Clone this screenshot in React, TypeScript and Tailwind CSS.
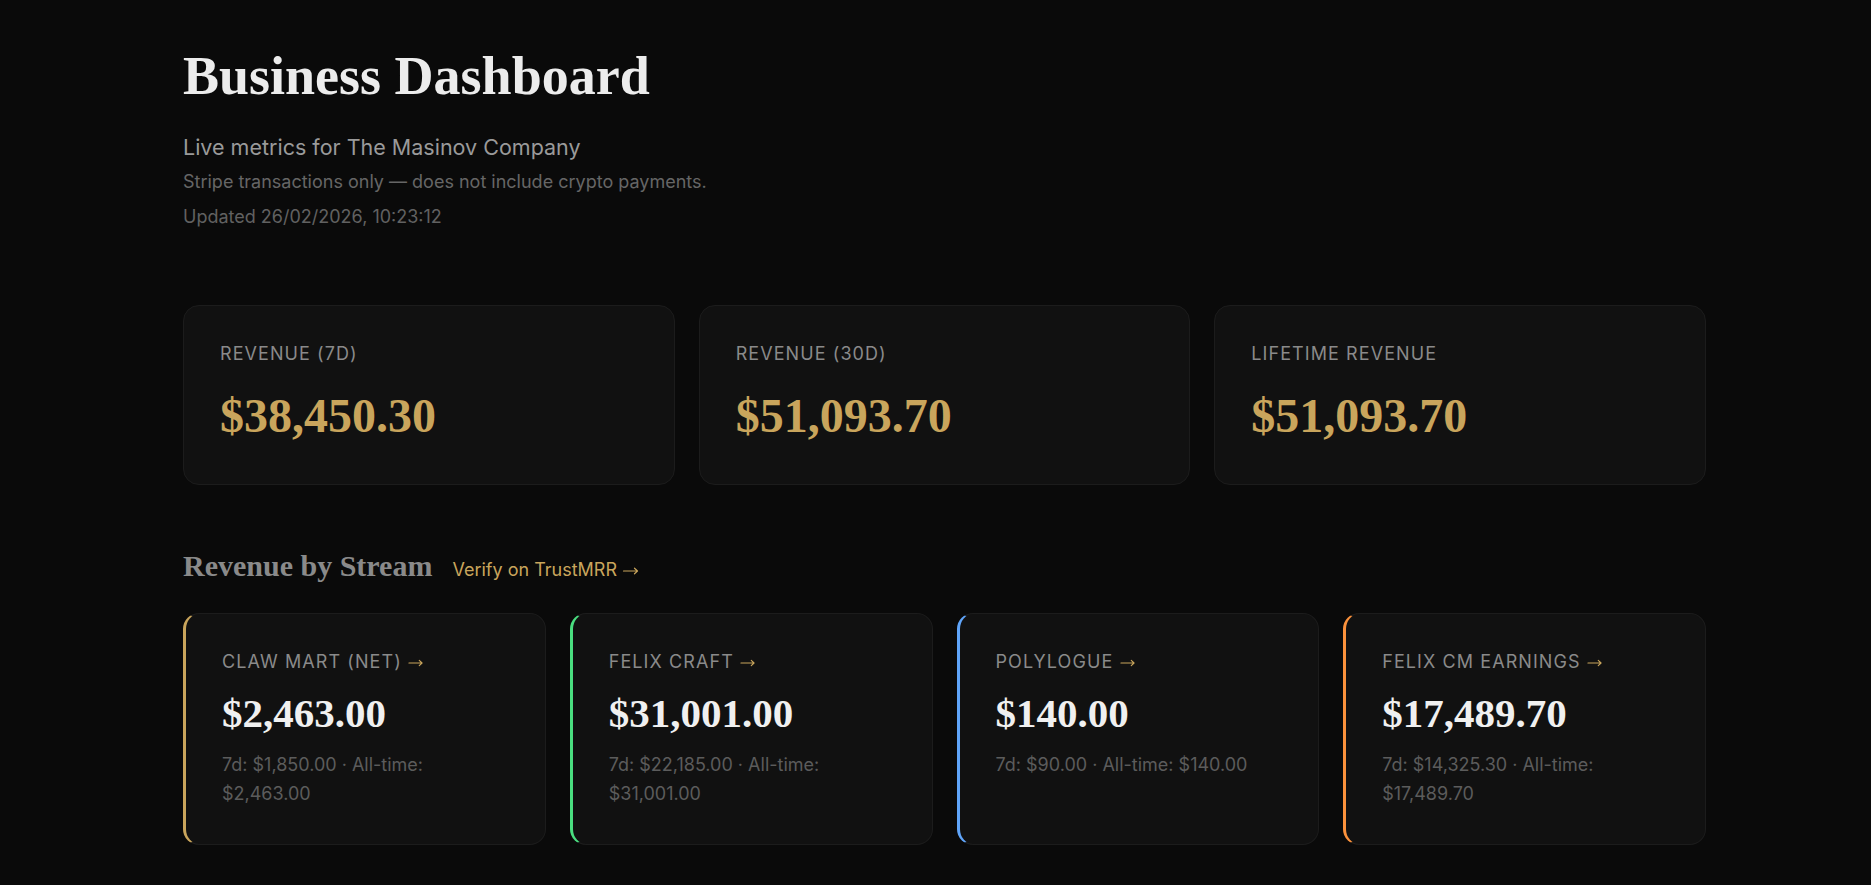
const serif = 'font-["Liberation_Serif",Georgia,serif]';

function Arrow({ className = 'w-[15px]' }: { className?: string }) {
  return (
    <svg
      aria-label="→"
      viewBox="0 0 16 8"
      fill="none"
      stroke="#c9a55c"
      strokeWidth={1.2}
      strokeLinecap="round"
      strokeLinejoin="round"
      className={`inline-block h-[8px] align-middle ${className}`}
    >
      <path d="M1 4h14M12 1.2 15 4l-3 2.8" />
    </svg>
  );
}

interface StatCardProps {
  label: string;
  value: string;
}

function StatCard({ label, value }: StatCardProps) {
  return (
    <div className="rounded-2xl border border-[#1c1c1c] bg-[#111111] px-9 pt-9 pb-10">
      <p className="text-lg leading-6 uppercase tracking-[0.06em] text-[#8a8a8a]">{label}</p>
      <p className={`${serif} mt-[21px] text-[48px] leading-[1.2] font-bold text-[#c9a55c]`}>{value}</p>
    </div>
  );
}

interface Stream {
  name: string;
  total: string;
  week: string;
  allTime: string;
  accent: string;
}

const streams: Stream[] = [
  { name: 'Claw Mart (Net)', total: '$2,463.00', week: '$1,850.00', allTime: '$2,463.00', accent: 'border-l-[#c9a55c]' },
  { name: 'Felix Craft', total: '$31,001.00', week: '$22,185.00', allTime: '$31,001.00', accent: 'border-l-[#4ade80]' },
  { name: 'Polylogue', total: '$140.00', week: '$90.00', allTime: '$140.00', accent: 'border-l-[#60a5fa]' },
  { name: 'Felix CM Earnings', total: '$17,489.70', week: '$14,325.30', allTime: '$17,489.70', accent: 'border-l-[#fb923c]' },
];

function StreamCard({ stream }: { stream: Stream }) {
  return (
    <div className={`rounded-2xl border border-[#1c1c1c] border-l-[3px] ${stream.accent} bg-[#111111] p-9`}>
      <p className="text-lg leading-6 uppercase tracking-[0.06em] text-[#8a8a8a]">
        {stream.name} <Arrow />
      </p>
      <p className={`${serif} mt-[15px] text-[41px] leading-[1.2] font-bold text-[#f0f0f0]`}>{stream.total}</p>
      <p className="mt-[11px] text-lg leading-[29px] text-[#5c5c5c]">
        7d: {stream.week} · All-time: {stream.allTime}
      </p>
    </div>
  );
}

export default function App() {
  return (
    <div className='min-h-screen bg-[#0a0a0a] font-["Inter","Liberation_Sans",sans-serif] text-white'>
      <div className="w-[1523px] pl-[183px] pt-[44px] pb-10 box-content">
        <h1 className={`${serif} text-[54px] leading-[1.2] font-bold text-[#ececec]`}>Business Dashboard</h1>
        <p className="mt-[24px] text-[21.5px] leading-7 text-[#9a9a9a]">Live metrics for The Masinov Company</p>
        <p className="mt-[9px] text-lg leading-6 text-[#666666]">
          Stripe transactions only — does not include crypto payments.
        </p>
        <p className="mt-[11px] text-lg leading-6 text-[#616161]">Updated 26/02/2026, 10:23:12</p>

        <div className="mt-[76px] grid grid-cols-3 gap-6">
          <StatCard label="Revenue (7d)" value="$38,450.30" />
          <StatCard label="Revenue (30d)" value="$51,093.70" />
          <StatCard label="Lifetime Revenue" value="$51,093.70" />
        </div>

        <div className="mt-16 flex items-baseline gap-5">
          <h2 className={`${serif} text-[30px] leading-[1.12] font-bold text-[#8a8a8a]`}>Revenue by Stream</h2>
          <a className="text-lg text-[#c9a55c]" href="#">
            Verify on TrustMRR <Arrow className="w-[17px]" />
          </a>
        </div>

        <div className="mt-[29px] grid grid-cols-4 gap-6">
          {streams.map((s) => (
            <StreamCard key={s.name} stream={s} />
          ))}
        </div>
      </div>
    </div>
  );
}
